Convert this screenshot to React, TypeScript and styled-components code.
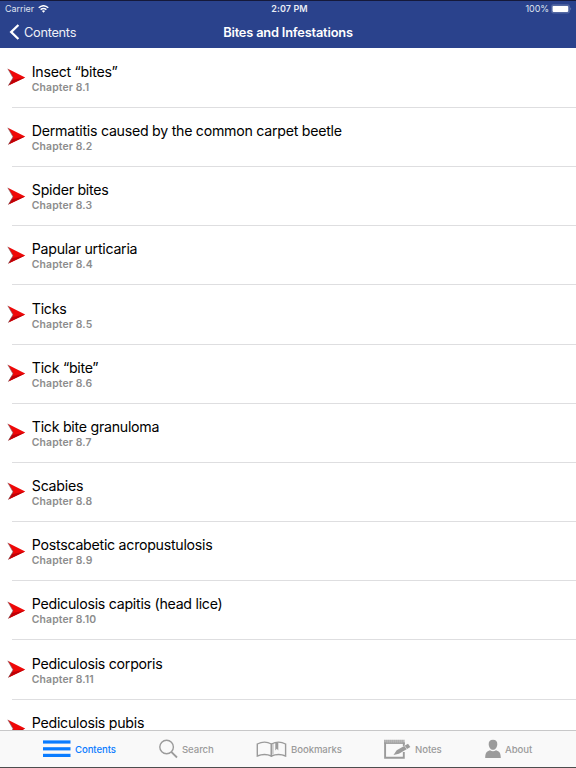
import React from "react";
import styled, { createGlobalStyle } from "styled-components";

const GlobalStyle = createGlobalStyle`
  * { box-sizing: border-box; }
  html, body { margin: 0; padding: 0; overflow: hidden; }
  body { font-family: Inter, "Liberation Sans", sans-serif; }
  svg { display: block; flex: none; }
`;

const Screen = styled.div`
  width: 576px;
  height: 768px;
  display: flex;
  flex-direction: column;
  overflow: hidden;
  background: #fff;
  border-bottom: 1px solid #4d4d4e;
`;

const Header = styled.header`
  flex: none;
  height: 48px;
  background: #2a428c;
  border-top: 1px solid #15193a;
  color: #fff;
`;

const TriBar = styled.div<{ $height: number }>`
  display: grid;
  grid-template-columns: 1fr auto 1fr;
  align-items: center;
  height: ${(p) => p.$height}px;
`;

const StatusLeft = styled.div`
  display: flex;
  align-items: center;
  gap: 4px;
  padding-left: 5px;
  font-size: 9px;
  letter-spacing: -0.05px;
  color: #dfe3ef;
`;

const Clock = styled.div`
  font-size: 9px;
  font-weight: 600;
  letter-spacing: 0.1px;
  padding-left: 3px;
  color: #e9ecf5;
`;

const StatusRight = styled.div`
  display: flex;
  align-items: center;
  justify-content: flex-end;
  gap: 2px;
  padding-right: 4px;
  font-size: 9px;
  letter-spacing: -0.1px;
  color: #dfe3ef;
`;

const BackButton = styled.div`
  display: flex;
  align-items: center;
  gap: 4px;
  padding-left: 9px;
  font-size: 12.8px;
  letter-spacing: -0.3px;
  color: #eef0f7;
`;

const Title = styled.h1`
  margin: 0;
  font-size: 12.8px;
  font-weight: 600;
  letter-spacing: -0.18px;
`;

const List = styled.main`
  flex: 1;
  min-height: 0;
  overflow: hidden;
  padding-top: 0.8px;
`;

const Row = styled.div`
  display: flex;
  height: 58.17px;
  padding-left: 7px;
`;

const Marker = styled.div`
  width: 24.8px;
  padding-top: 19.5px;
`;

const RowText = styled.div`
  padding-top: 14.2px;
`;

const RowTitle = styled.div`
  font-size: 14.2px;
  line-height: 17px;
  letter-spacing: -0.27px;
  color: #000;
  white-space: nowrap;
`;

const RowSub = styled.div`
  margin-top: 1px;
  font-size: 10.4px;
  line-height: 13px;
  font-weight: 600;
  letter-spacing: 0.13px;
  color: #8c8c8c;
`;

const Divider = styled.div`
  height: 1px;
  margin-left: 12px;
  background: #dedee0;
`;

const TabBar = styled.nav`
  flex: none;
  display: flex;
  height: 37px;
  padding-left: 43px;
  background: #f9f9f9;
  border-top: 1px solid #c8c8c9;
`;

const Tab = styled.div<{ $width: number; $active?: boolean }>`
  display: flex;
  align-items: center;
  width: ${(p) => p.$width}px;
  font-size: 9.6px;
  font-weight: 500;
  letter-spacing: -0.08px;
  color: ${(p) => (p.$active ? "#0a7cff" : "#9b9b9b")};
`;

const TabIcon = styled.div<{ $slot: number }>`
  width: ${(p) => p.$slot}px;
  flex: none;
`;

const Arrow = () => (
  <svg width="19" height="19" viewBox="0 0 19 19">
    <path d="M.8 .8 L18.2 9.6 L1.4 17.6 L6 9.8 Z" fill="#ef0808" />
    <path d="M4.6 12.2 L18.2 9.6 L1.4 17.6 Z" fill="#c00006" />
    <path d="M.8 .8 L6 9.8 L1.4 17.6" fill="none" stroke="#74686b" strokeWidth=".6" />
  </svg>
);

const Wifi = () => (
  <svg width="11" height="8" viewBox="0 0 11 8" fill="none" stroke="#fff" strokeWidth="1.4">
    <path d="M.7 2.7 Q5.5 -1.3 10.3 2.7" />
    <path d="M2.6 4.6 Q5.5 2.3 8.4 4.6" />
    <path d="M3.9 5.9 Q5.5 4.8 7.1 5.9 L5.5 7.7 Z" fill="#fff" stroke="none" />
  </svg>
);

const Battery = () => (
  <svg width="21" height="10" viewBox="0 0 21 10">
    <rect x=".2" y=".3" width="18.6" height="9.2" rx="2" fill="#5368a3" />
    <rect x="1.6" y="1.9" width="15.6" height="6" rx=".8" fill="#fff" />
    <path d="M19.4 3.3 Q21 4.9 19.4 6.5 Z" fill="#7e8dba" />
  </svg>
);

const Chevron = () => (
  <svg width="11" height="16" viewBox="0 0 11 16">
    <path d="M9.4 1 L2.2 8 L9.4 15" fill="none" stroke="#fff" strokeWidth="2.3" />
  </svg>
);

const MenuIcon = () => (
  <svg width="28" height="18" viewBox="0 0 28 18" fill="#0a7cff">
    <rect width="27.5" height="3.2" y=".4" />
    <rect width="27.5" height="3.2" y="7.2" />
    <rect width="27.5" height="3.2" y="13.8" />
  </svg>
);

const SearchIcon = () => (
  <svg width="20" height="20" viewBox="0 0 20 20" fill="none" stroke="#9b9b9b">
    <circle cx="7.6" cy="8" r="6.8" strokeWidth="1.4" />
    <path d="M12.3 12.8 L18 18.5" strokeWidth="1.8" />
  </svg>
);

const BookIcon = () => (
  <svg width="31" height="18" viewBox="-.6 0 31 18" fill="none" stroke="#9b9b9b" strokeWidth="1.4">
    <path d="M.7 16 V4 Q8 .3 14.8 4 V16 Q8 13 .7 16 Z" />
    <path d="M14.8 16 V4 Q22 .3 29 4 V16 Q22 13 14.8 16 Z" />
    <path d="M16.4 3.6 V14.2" strokeWidth=".7" />
    <path d="M18.7 2.5 H21.7 V10.4 L20.2 8.8 L18.7 10.4 Z" fill="#9b9b9b" stroke="none" />
  </svg>
);

const NotesIcon = () => (
  <svg width="27" height="21" viewBox="0.6 0 27 21" fill="none" stroke="#9b9b9b">
    <path d="M1.7 3.6 V18.8 H20.4 V13 M20.4 7 V3.6" strokeWidth="1.9" />
    <path d="M.8 4.3 H21.3" strokeWidth="1.2" />
    <path d="M.8 2.3 H21.3" strokeWidth="3.2" strokeDasharray="1.5 .5" />
    <path d="M10.1 15.9 L13.3 11.3 L24.6 4.7 L27 8 L15.5 14.8 Z" fill="#9b9b9b" stroke="none" />
    <path d="M20.9 6.5 L23.4 10" stroke="#f9f9f9" strokeWidth=".6" />
  </svg>
);

const PersonIcon = () => (
  <svg width="16" height="20" viewBox="0 0 16 20" fill="#9b9b9b">
    <path d="M8 .8 C5 .8 3.5 2.8 3.7 5.4 C3.9 8.3 5.7 10.8 8 10.8 C10.3 10.8 12.1 8.3 12.3 5.4 C12.5 2.8 11 .8 8 .8 Z" />
    <path d="M.2 19 C.2 13.5 1.7 12.4 5 11.2 Q8 13.4 11 11.2 C14.3 12.4 15.8 13.5 15.8 19 Z" />
  </svg>
);

const chapters: { name: string; number?: string }[] = [
  { name: "Insect “bites”", number: "8.1" },
  { name: "Dermatitis caused by the common carpet beetle", number: "8.2" },
  { name: "Spider bites", number: "8.3" },
  { name: "Papular urticaria", number: "8.4" },
  { name: "Ticks", number: "8.5" },
  { name: "Tick “bite”", number: "8.6" },
  { name: "Tick bite granuloma", number: "8.7" },
  { name: "Scabies", number: "8.8" },
  { name: "Postscabetic acropustulosis", number: "8.9" },
  { name: "Pediculosis capitis (head lice)", number: "8.10" },
  { name: "Pediculosis corporis", number: "8.11" },
  { name: "Pediculosis pubis" },
];

const tabs = [
  { label: "Contents", width: 116, slot: 32, Icon: MenuIcon, active: true },
  { label: "Search", width: 97, slot: 23, Icon: SearchIcon },
  { label: "Bookmarks", width: 128, slot: 35, Icon: BookIcon },
  { label: "Notes", width: 101, slot: 31, Icon: NotesIcon },
  { label: "About", width: 70, slot: 20, Icon: PersonIcon },
];

export default function App() {
  return (
    <Screen>
      <GlobalStyle />
      <Header>
        <TriBar $height={15}>
          <StatusLeft>Carrier <Wifi /></StatusLeft>
          <Clock>2:07 PM</Clock>
          <StatusRight>100% <Battery /></StatusRight>
        </TriBar>
        <TriBar $height={32}>
          <BackButton><Chevron />Contents</BackButton>
          <Title>Bites and Infestations</Title>
        </TriBar>
      </Header>
      <List>
        {chapters.map(({ name, number }, i) => (
          <React.Fragment key={name}>
            {i > 0 && <Divider />}
            <Row>
              <Marker><Arrow /></Marker>
              <RowText>
                <RowTitle>{name}</RowTitle>
                {number && <RowSub>Chapter {number}</RowSub>}
              </RowText>
            </Row>
          </React.Fragment>
        ))}
      </List>
      <TabBar>
        {tabs.map(({ label, width, slot, Icon, active }) => (
          <Tab key={label} $width={width} $active={active}>
            <TabIcon $slot={slot}><Icon /></TabIcon>
            {label}
          </Tab>
        ))}
      </TabBar>
    </Screen>
  );
}
